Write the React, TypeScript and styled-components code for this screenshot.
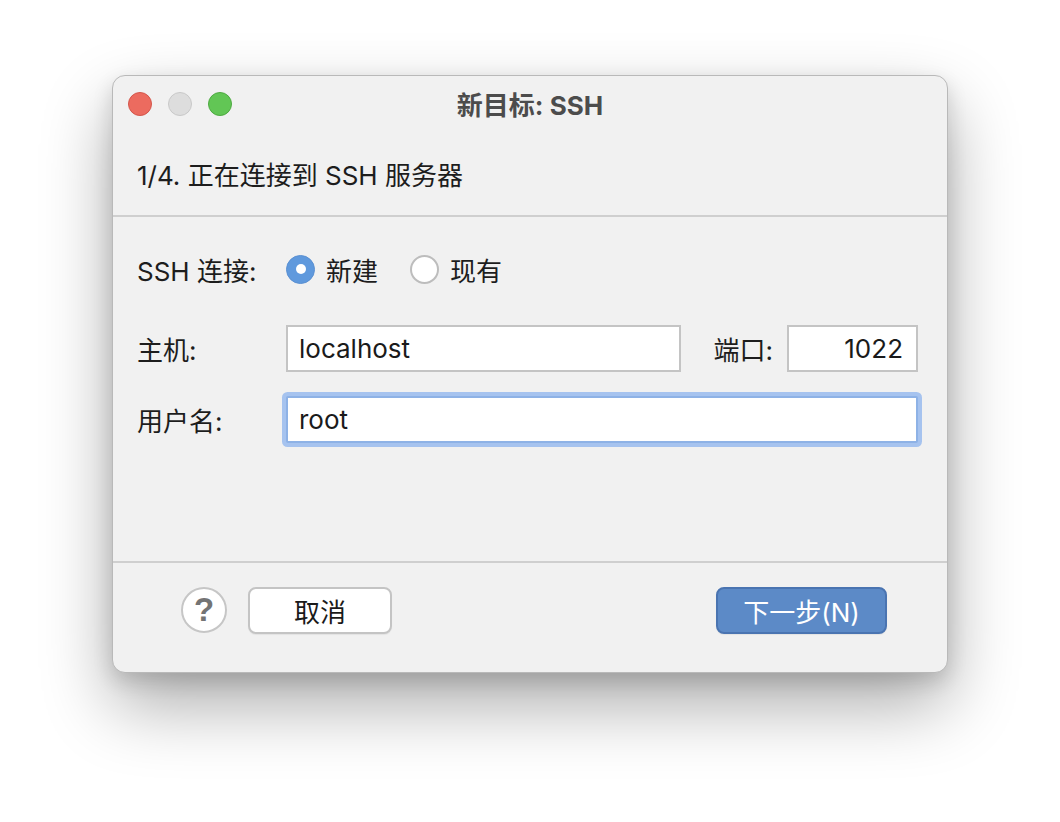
import styled, { createGlobalStyle } from "styled-components";

const GlobalStyle = createGlobalStyle`
  html, body {
    margin: 0;
    padding: 0;
    background: #ffffff;
  }
  body {
    font-family: "Inter", "Noto Sans CJK SC", sans-serif;
    font-size: 26px;
    color: #1d1d1d;
    -webkit-font-smoothing: antialiased;
  }
`;

const Page = styled.div`
  width: 1060px;
  height: 822px;
  padding: 75px 0 0 112px;
  box-sizing: border-box;
`;

const Window = styled.div`
  width: 836px;
  height: 598px;
  box-sizing: border-box;
  background: #f1f1f1;
  border-radius: 13px;
  border: 1px solid #b9b9b9;
  box-shadow: 0 32px 70px rgba(0, 0, 0, 0.33), 0 8px 20px rgba(0, 0, 0, 0.14);
  display: flex;
  flex-direction: column;
  overflow: hidden;
`;

const TitleBar = styled.div`
  height: 55px;
  display: grid;
  grid-template-columns: 1fr auto 1fr;
  align-items: center;
  padding: 0 15px;
`;

const Lights = styled.div`
  display: flex;
  gap: 16px;
`;

const Light = styled.span<{ $fill: string; $edge: string }>`
  width: 24px;
  height: 24px;
  border-radius: 50%;
  box-sizing: border-box;
  background: ${(p) => p.$fill};
  border: 1px solid ${(p) => p.$edge};
`;

const Title = styled.div`
  font-weight: 700;
  font-size: 26px;
  color: #4c4c4c;
`;

const Header = styled.div`
  height: 84px;
  display: flex;
  align-items: center;
  padding-left: 24px;
  border-bottom: 2px solid #cfcfcf;
`;

const Body = styled.div`
  flex: 1;
  padding: 37px 29px 0 173px;
  display: flex;
  flex-direction: column;
`;

const FormRow = styled.div<{ $height: number; $gap: number }>`
  display: flex;
  align-items: center;
  height: ${(p) => p.$height}px;
  margin-bottom: ${(p) => p.$gap}px;
  margin-left: -149px;
`;

const RowLabel = styled.span`
  width: 149px;
  flex: 0 0 149px;
  white-space: nowrap;
`;

const Radio = styled.span<{ $on?: boolean }>`
  width: 29px;
  height: 29px;
  border-radius: 50%;
  box-sizing: border-box;
  display: flex;
  align-items: center;
  justify-content: center;
  background: ${(p) => (p.$on ? "#5f99dd" : "#ffffff")};
  border: ${(p) => (p.$on ? "1px solid #5a90d2" : "2px solid #bdbdbd")};
  margin-right: 11px;

  &::after {
    content: "";
    display: ${(p) => (p.$on ? "block" : "none")};
    width: 10px;
    height: 10px;
    border-radius: 50%;
    background: #ffffff;
  }
`;

const RadioText = styled.span<{ $gap?: number }>`
  margin-right: ${(p) => p.$gap ?? 0}px;
`;

const Field = styled.input<{ $focus?: boolean; $width?: number; $right?: boolean }>`
  box-sizing: border-box;
  height: 47px;
  width: ${(p) => (p.$width ? `${p.$width}px` : "auto")};
  flex: ${(p) => (p.$width ? "0 0 auto" : "1")};
  min-width: 0;
  background: #ffffff;
  border: 2px solid ${(p) => (p.$focus ? "#8eb2e6" : "#c4c4c4")};
  box-shadow: ${(p) => (p.$focus ? "0 0 0 4px #a6c3ef" : "none")};
  border-radius: ${(p) => (p.$focus ? "2px" : "0")};
  padding: 0 13px 0 11px;
  font-family: inherit;
  font-size: 26px;
  color: #1a1a1a;
  text-align: ${(p) => (p.$right ? "right" : "left")};
  outline: none;
`;

const PortLabel = styled.span`
  margin: 0 14px 0 33px;
  white-space: nowrap;
`;

const Footer = styled.div`
  height: 111px;
  box-sizing: border-box;
  border-top: 2px solid #cfcfcf;
  display: flex;
  align-items: flex-start;
  padding: 24px 60px 0 68px;
`;

const HelpButton = styled.button`
  width: 46px;
  height: 46px;
  border-radius: 50%;
  border: 2px solid #c6c6c6;
  background: #ffffff;
  color: #747474;
  font-family: "Liberation Sans", sans-serif;
  font-weight: 700;
  font-size: 33px;
  line-height: 1;
  padding: 0 0 1px;
  display: flex;
  align-items: center;
  justify-content: center;
  margin-right: 21px;
`;

const Button = styled.button<{ $primary?: boolean; $width: number }>`
  width: ${(p) => p.$width}px;
  height: 47px;
  box-sizing: border-box;
  border-radius: 8px;
  font-family: inherit;
  font-size: 26px;
  padding: 0;
  background: ${(p) => (p.$primary ? "#5c8ac7" : "#ffffff")};
  color: ${(p) => (p.$primary ? "#ffffff" : "#1a1a1a")};
  border: 2px solid ${(p) => (p.$primary ? "#4a74b1" : "#c4c4c4")};
  box-shadow: 0 1px 1px rgba(0, 0, 0, 0.06);
`;

const Spacer = styled.div`
  flex: 1;
`;

export default function App() {
  return (
    <>
      <GlobalStyle />
      <Page>
        <Window>
          <TitleBar>
            <Lights>
              <Light $fill="#ec6b5f" $edge="#d4564b" />
              <Light $fill="#dddddd" $edge="#c9c9c9" />
              <Light $fill="#62c655" $edge="#4eaa41" />
            </Lights>
            <Title>新目标: SSH</Title>
            <div />
          </TitleBar>
          <Header>1/4. 正在连接到 SSH 服务器</Header>
          <Body>
            <FormRow $height={30} $gap={41}>
              <RowLabel>SSH 连接:</RowLabel>
              <Radio $on />
              <RadioText $gap={32}>新建</RadioText>
              <Radio />
              <RadioText>现有</RadioText>
            </FormRow>
            <FormRow $height={47} $gap={24}>
              <RowLabel>主机:</RowLabel>
              <Field defaultValue="localhost" />
              <PortLabel>端口:</PortLabel>
              <Field $width={131} $right defaultValue="1022" />
            </FormRow>
            <FormRow $height={47} $gap={0}>
              <RowLabel>用户名:</RowLabel>
              <Field $focus defaultValue="root" />
            </FormRow>
          </Body>
          <Footer>
            <HelpButton>?</HelpButton>
            <Button $width={144}>取消</Button>
            <Spacer />
            <Button $primary $width={171}>
              下一步(N)
            </Button>
          </Footer>
        </Window>
      </Page>
    </>
  );
}
